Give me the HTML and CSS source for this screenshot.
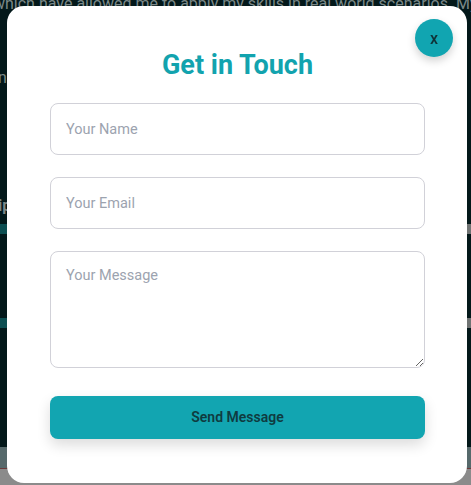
FILE: index.html
```html
<!DOCTYPE html>
<html lang="en">
<head>
<meta charset="utf-8">
<title>Get in Touch</title>
<link rel="stylesheet" href="styles.css">
</head>
<body>
<div class="page">
  <p class="bg-line top">which have allowed me to apply my skills in real world scenarios. My</p>
  <p class="bg-line mid">n</p>
  <p class="bg-line sub">ip</p>
  <div class="bg-bar first"></div>
  <div class="bg-bar second"></div>
  <div class="bg-footer">
    <div class="bg-footer-band"></div>
    <div class="bg-footer-low"></div>
  </div>
</div>

<div class="overlay">
  <div class="modal">
    <button class="close" type="button">x</button>
    <h2 class="title">Get in Touch</h2>
    <form class="form">
      <input class="field" type="text" placeholder="Your Name">
      <input class="field" type="email" placeholder="Your Email">
      <textarea class="field area" placeholder="Your Message"></textarea>
      <button class="send" type="button">Send Message</button>
    </form>
  </div>
</div>
</body>
</html>
```

FILE: styles.css
```css
* { box-sizing: border-box; }

html, body {
  margin: 0;
  padding: 0;
  height: 100%;
}

body {
  background: #03181a;
  font-family: Roboto, "Liberation Sans", sans-serif;
  overflow: hidden;
}

.page {
  display: flex;
  flex-direction: column;
  height: 485px;
}

.bg-line {
  margin: 0;
  color: #7b8888;
  font-size: 16px;
  line-height: 20px;
  white-space: nowrap;
}

.bg-line.top { margin-top: -6px; margin-left: -7px; }
.bg-line.mid { margin-top: 54px; margin-left: -2px; }
.bg-line.sub { margin-top: 108px; margin-left: -2px; font-weight: 700; }

.bg-bar {
  height: 10px;
  background: linear-gradient(90deg, #0c4e51 0%, #0c4e51 50%, #6f7373 50%, #6f7373 100%);
}

.bg-bar.first { margin-top: 8px; }
.bg-bar.second { margin-top: 84px; }

.bg-footer {
  margin-top: 119px;
  flex: 1;
  display: flex;
  flex-direction: column;
}

.bg-footer-band {
  height: 22px;
  background: #56696b;
  border-bottom: 1px solid #6a3a3a;
}

.bg-footer-low {
  flex: 1;
  background: #8b8b8b;
}

.overlay {
  position: fixed;
  inset: 0;
  padding: 6px 4px 2px 7px;
}

.modal {
  position: relative;
  width: 460px;
  height: 477px;
  background: #ffffff;
  border-radius: 17px;
  padding: 43px 42px 0 43px;
}

.close {
  position: absolute;
  top: 13px;
  right: 14px;
  width: 38px;
  height: 38px;
  border: none;
  border-radius: 50%;
  background: #11a5b1;
  color: #0f3338;
  font-family: Roboto, "Liberation Sans", sans-serif;
  font-size: 16px;
  font-weight: 500;
  padding: 0;
  box-shadow: 0 4px 8px rgba(0, 0, 0, 0.18);
}

.title {
  margin: 0;
  text-align: center;
  color: #12a3ae;
  font-size: 27px;
  font-weight: 700;
  line-height: 32px;
}

.form {
  margin-top: 22px;
  display: flex;
  flex-direction: column;
  gap: 22px;
}

.field {
  display: block;
  width: 100%;
  height: 52px;
  border: 1px solid #d1d1d8;
  border-radius: 8px;
  padding: 0 15px;
  font-family: Roboto, "Liberation Sans", sans-serif;
  font-size: 14.5px;
  color: #333;
  background: #fff;
  outline: none;
}

.field::placeholder { color: #9ca3af; }

.area {
  height: 117px;
  padding: 15px 15px;
  resize: vertical;
}

.send {
  margin-top: 6px;
  height: 43px;
  width: 100%;
  border: none;
  border-radius: 8px;
  background: #12a5b1;
  color: #0f3b40;
  font-family: Roboto, "Liberation Sans", sans-serif;
  font-size: 14px;
  font-weight: 600;
  padding-bottom: 2px;
  box-shadow: 0 6px 14px rgba(0, 0, 0, 0.14);
}
```
